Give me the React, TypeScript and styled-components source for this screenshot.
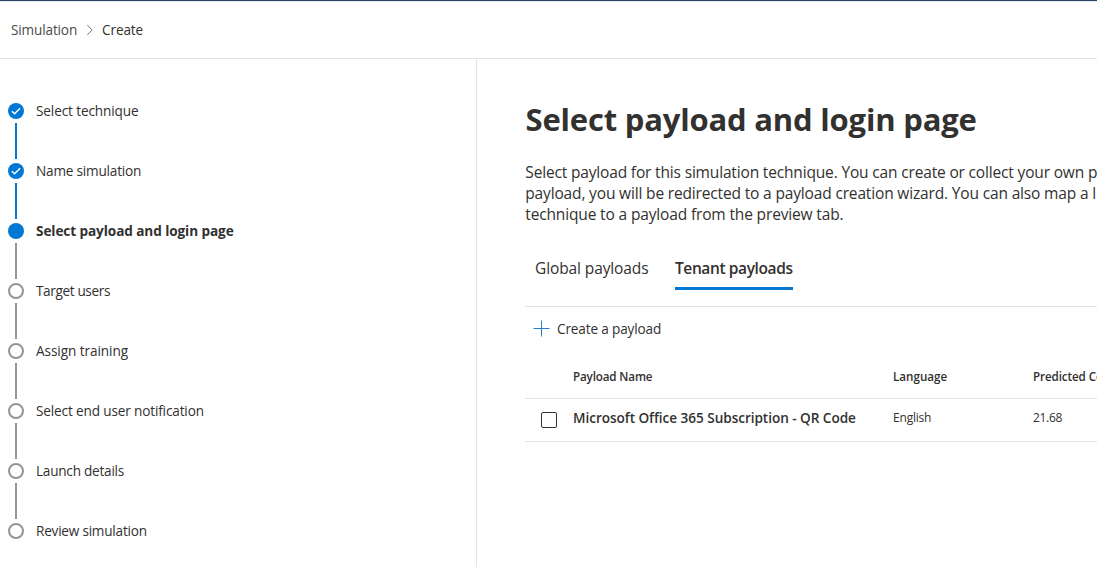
import React from "react";
import styled, { createGlobalStyle } from "styled-components";

const colors = {
  text: "#323130",
  accent: "#0078d4",
  line: "#e3e3e3",
  muted: "#979593",
};

const GlobalStyle = createGlobalStyle`
  * { box-sizing: border-box; }
  body {
    margin: 0;
    background: #fff;
    color: ${colors.text};
    font-family: "Segoe UI", "Open Sans", sans-serif;
  }
`;

const Page = styled.div`
  display: flex;
  flex-direction: column;
  width: 100%;
  height: 567px;
  overflow: hidden;
`;

const SuiteBar = styled.div`
  flex: none;
  height: 2px;
  background: #e9edf2;
  border-top: 1px solid #2b4464;
`;

const Header = styled.header`
  flex: none;
  display: flex;
  align-items: center;
  height: 57px;
  padding: 0 0 0 11px;
  border-bottom: 1px solid ${colors.line};
`;

const Text = styled.span<{
  $size?: number;
  $weight?: number;
  $track?: number;
  $color?: string;
}>`
  font-size: ${(p) => p.$size ?? 13.6}px;
  font-weight: ${(p) => p.$weight ?? 400};
  letter-spacing: ${(p) => p.$track ?? 0}px;
  color: ${(p) => p.$color ?? colors.text};
  line-height: 20px;
  white-space: nowrap;
`;

const Chevron = styled.svg`
  width: 8px;
  height: 12px;
  margin: 0 8px 0 9px;
`;

const Body = styled.div`
  flex: 1;
  display: flex;
  min-height: 0;
`;

const Sidebar = styled.nav`
  flex: none;
  width: 477px;
  padding: 44px 0 0 8px;
  border-right: 1px solid ${colors.line};
`;

const Steps = styled.ol`
  list-style: none;
  margin: 0;
  padding: 0;
`;

const Step = styled.li`
  display: flex;
  gap: 12px;
  height: 60px;
`;

const Rail = styled.div`
  display: flex;
  flex-direction: column;
  align-items: center;
  gap: 4px;
  width: 16px;
`;

const Connector = styled.div<{ $done: boolean }>`
  width: 2px;
  height: 36px;
  background: ${(p) => (p.$done ? colors.accent : colors.muted)};
`;

const StepLabel = styled(Text)`
  line-height: 16px;
`;

const Main = styled.main`
  flex: 1;
  min-width: 0;
  padding: 37px 0 0 48px;
  overflow: hidden;
`;

const Title = styled.h1`
  margin: 0 0 20px;
  padding-left: 0.5px;
  font-size: 31px;
  font-weight: 700;
  line-height: 46px;
  letter-spacing: -0.19px;
  white-space: nowrap;
`;

const Description = styled.p`
  margin: 0;
  padding-left: 0.3px;
  font-size: 15.52px;
  line-height: 21px;
`;

const Line = styled.span<{ $track: number }>`
  display: block;
  letter-spacing: ${(p) => p.$track}px;
  white-space: nowrap;
`;

const Tabs = styled.div`
  display: flex;
  gap: 27px;
  height: 65px;
  margin-top: 16px;
  padding: 0 0 0 10px;
`;

const Tab = styled.button<{ $active?: boolean; $width: number; $track: number }>`
  width: ${(p) => p.$width}px;
  height: 49px;
  padding: 8px 0 0;
  border: 0;
  border-bottom: 3px solid ${(p) => (p.$active ? colors.accent : "transparent")};
  background: none;
  color: ${colors.text};
  font: ${(p) => (p.$active ? 600 : 400)} 15.52px/32px "Segoe UI", "Open Sans", sans-serif;
  letter-spacing: ${(p) => p.$track}px;
  text-align: left;
  white-space: nowrap;
`;

const CommandBar = styled.div`
  display: flex;
  align-items: center;
  gap: 7px;
  height: 46px;
  padding: 0 0 2px 8px;
  border-top: 1px solid ${colors.line};
`;

const PlusIcon = styled.svg`
  width: 17px;
  height: 17px;
`;

const Row = styled.div<{ $height: number; $shift: number }>`
  display: grid;
  grid-template-columns: 48px 320px 140px 1fr;
  align-items: center;
  height: ${(p) => p.$height}px;
  padding-top: ${(p) => Math.max(p.$shift, 0)}px;
  padding-bottom: ${(p) => Math.max(-p.$shift, 0)}px;
  border-bottom: 1px solid ${colors.line};
`;

const Checkbox = styled.span`
  width: 16px;
  height: 16px;
  margin: 4px 0 0 16px;
  border: 1px solid ${colors.text};
  border-radius: 2px;
`;

type State = "done" | "current" | "todo";

const steps: { label: string; state: State; track: number }[] = [
  { label: "Select technique", state: "done", track: -0.12 },
  { label: "Name simulation", state: "done", track: -0.2 },
  { label: "Select payload and login page", state: "current", track: -0.09 },
  { label: "Target users", state: "todo", track: -0.37 },
  { label: "Assign training", state: "todo", track: -0.07 },
  { label: "Select end user notification", state: "todo", track: -0.15 },
  { label: "Launch details", state: "todo", track: -0.24 },
  { label: "Review simulation", state: "todo", track: -0.22 },
];

function StepMarker({ state }: { state: State }) {
  return (
    <svg width="16" height="16" viewBox="0 0 16 16" fill="none">
      {state === "todo" ? (
        <circle cx="8" cy="8" r="7" stroke={colors.muted} strokeWidth="2" />
      ) : (
        <circle cx="8" cy="8" r="8" fill={colors.accent} />
      )}
      {state === "done" && (
        <path d="M3.9 8.2 6.6 10.8 12.1 5.3" stroke="#fff" strokeWidth="1.5" />
      )}
    </svg>
  );
}

export default function App() {
  return (
    <Page>
      <GlobalStyle />
      <SuiteBar />
      <Header>
        <Text $color="#4c4a48" $track={-0.15}>Simulation</Text>
        <Chevron viewBox="0 0 8 12" fill="none">
          <path d="M1.3 1.2 6.2 6 1.3 10.8" stroke="#777573" />
        </Chevron>
        <Text $track={-0.15}>Create</Text>
      </Header>
      <Body>
        <Sidebar>
          <Steps>
            {steps.map((s, i) => (
              <Step key={s.label}>
                <Rail>
                  <StepMarker state={s.state} />
                  {i < steps.length - 1 && <Connector $done={s.state === "done"} />}
                </Rail>
                <StepLabel $track={s.track} $weight={s.state === "current" ? 700 : 400}>
                  {s.label}
                </StepLabel>
              </Step>
            ))}
          </Steps>
        </Sidebar>
        <Main>
          <Title>Select payload and login page</Title>
          <Description>
            <Line $track={-0.17}>
              Select payload for this simulation technique. You can create or collect your own p
            </Line>
            <Line $track={-0.165}>
              payload, you will be redirected to a payload creation wizard. You can also map a l
            </Line>
            <Line $track={-0.155}>technique to a payload from the preview tab.</Line>
          </Description>
          <Tabs>
            <Tab $width={113} $track={-0.12}>Global payloads</Tab>
            <Tab $width={118} $track={-0.4} $active>Tenant payloads</Tab>
          </Tabs>
          <CommandBar>
            <PlusIcon viewBox="0 0 17 17" fill="none">
              <path d="M0.5 8.5h16M8.5 0.5v16" stroke="#2b7cd3" />
            </PlusIcon>
            <Text $track={-0.15}>Create a payload</Text>
          </CommandBar>
          <Row $height={47} $shift={4}>
            <span />
            <Text $size={11.64} $weight={600} $track={-0.14}>Payload Name</Text>
            <Text $size={11.64} $weight={600}>Language</Text>
            <Text $size={11.64} $weight={600} $track={-0.1}>Predicted Co</Text>
          </Row>
          <Row $height={43} $shift={-4}>
            <Checkbox />
            <Text $weight={600} $track={-0.05}>
              Microsoft Office 365 Subscription - QR Code
            </Text>
            <Text $size={12} $track={-0.2}>English</Text>
            <Text $size={12} $track={-0.3}>21.68</Text>
          </Row>
        </Main>
      </Body>
    </Page>
  );
}
